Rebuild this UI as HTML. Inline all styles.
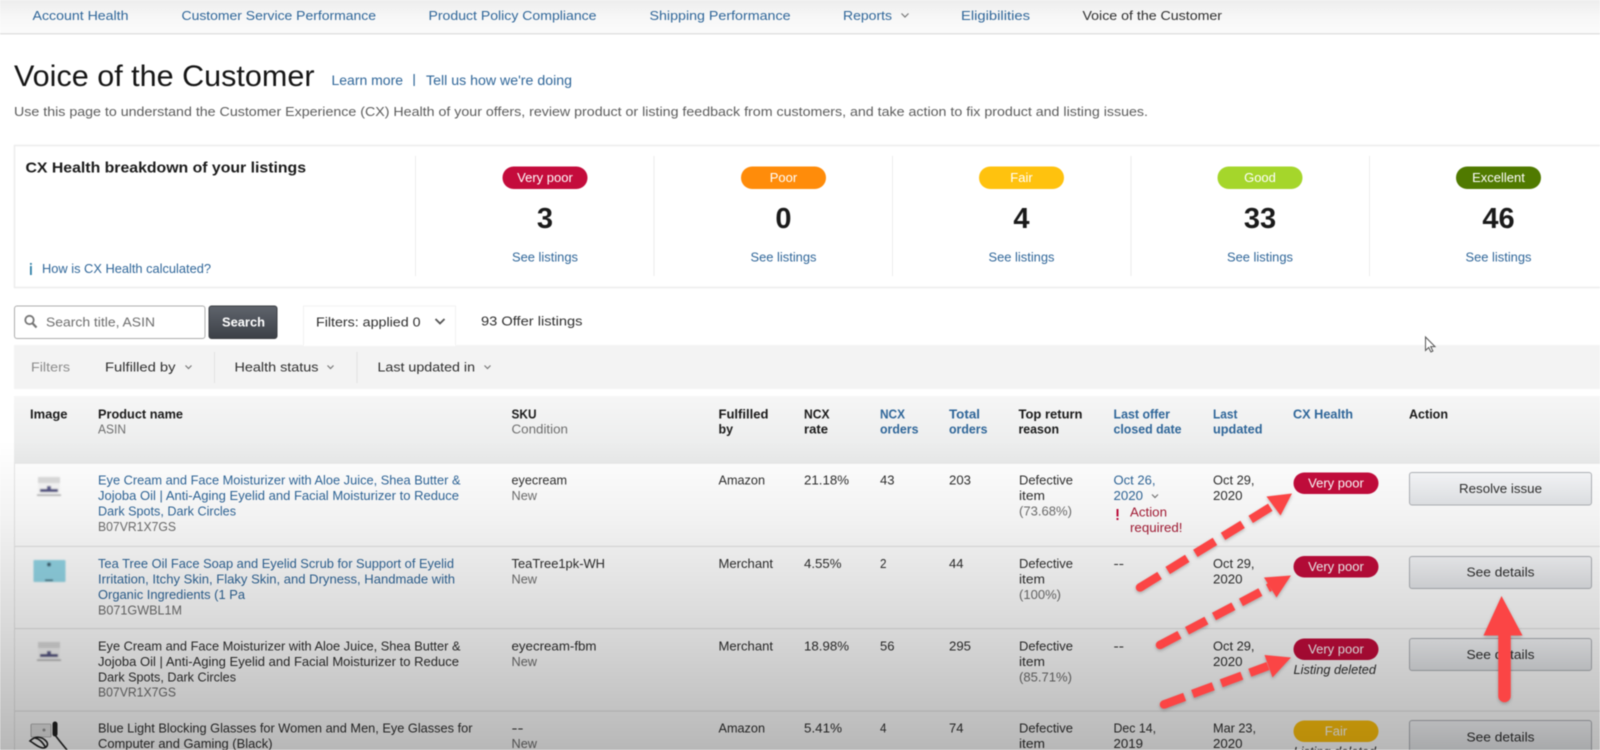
<!DOCTYPE html>
<html lang="en"><head><meta charset="utf-8"><title>Voice of the Customer</title>
<style>
html,body{margin:0;padding:0;background:#fff;width:1600px;height:750px;overflow:hidden}
svg{display:block;position:absolute;left:0;top:0;filter:blur(.5px)}
text{font-family:"Liberation Sans",sans-serif;font-size:13px;fill:#2e2e2e;white-space:pre}
.l{fill:#2f6699}.g{fill:#6e6e6e}.b{font-weight:700;fill:#1a1a1a}.lb{font-weight:700;fill:#2f6699}
.w{fill:#fff;text-anchor:middle}.r{fill:#a81c36}
.c{fill:none;stroke:#777;stroke-width:1.2}
.dash{fill:none;stroke:#fb4444;stroke-width:8.5}
.hd{fill:#fb4444}
.btn{fill:url(#bt);stroke:#b0b3b8;stroke-width:1}
</style></head><body>
<svg width="1600" height="750" viewBox="0 0 1600 750" xmlns="http://www.w3.org/2000/svg">
<defs>
<linearGradient id="nav" x1="0" y1="0" x2="0" y2="1"><stop offset="0" stop-color="#ededed"/><stop offset=".5" stop-color="#f7f7f7"/><stop offset="1" stop-color="#fbfbfb"/></linearGradient>
<linearGradient id="hd" x1="0" y1="0" x2="0" y2="1"><stop offset="0" stop-color="#f6f6f6"/><stop offset="1" stop-color="#e9eaea"/></linearGradient>
<linearGradient id="bt" x1="0" y1="0" x2="0" y2="1"><stop offset="0" stop-color="#f7f8fa"/><stop offset="1" stop-color="#e4e6e9"/></linearGradient>
<linearGradient id="sb" x1="0" y1="0" x2="0" y2="1"><stop offset="0" stop-color="#5f646c"/><stop offset="1" stop-color="#3c4047"/></linearGradient>
<linearGradient id="ov" x1="0" y1="0" x2="0" y2="1"><stop offset="0" stop-color="#000" stop-opacity="0"/><stop offset=".25" stop-color="#000" stop-opacity=".05"/><stop offset=".6" stop-color="#000" stop-opacity=".15"/><stop offset="1" stop-color="#000" stop-opacity=".28"/></linearGradient>
<filter id="sh" x="-20%" y="-20%" width="140%" height="140%"><feDropShadow dx="0" dy="1.5" stdDeviation="1.5" flood-color="#000" flood-opacity=".25"/></filter>
<filter id="bl" x="-10%" y="-10%" width="120%" height="120%"><feGaussianBlur stdDeviation=".8"/></filter>
</defs>

<!-- nav -->
<rect width="1600" height="33" fill="url(#nav)"/>
<rect y="33" width="1600" height="1.5" fill="#e2e2e2"/>
<text class="l" x="32.5" y="20" textLength="96" lengthAdjust="spacingAndGlyphs">Account Health</text>
<text class="l" x="181.5" y="20" textLength="194.5" lengthAdjust="spacingAndGlyphs">Customer Service Performance</text>
<text class="l" x="428.5" y="20" textLength="168" lengthAdjust="spacingAndGlyphs">Product Policy Compliance</text>
<text class="l" x="649.5" y="20" textLength="141" lengthAdjust="spacingAndGlyphs">Shipping Performance</text>
<text class="l" x="843" y="20" textLength="49" lengthAdjust="spacingAndGlyphs">Reports</text>
<path class="c" d="M901.5 13.5l3.5 3.5 3.5-3.5"/>
<text class="l" x="961" y="20" textLength="69" lengthAdjust="spacingAndGlyphs">Eligibilities</text>
<text x="1082.5" y="20" textLength="139.5" lengthAdjust="spacingAndGlyphs">Voice of the Customer</text>

<!-- title -->
<text x="14" y="86" style="font-size:30px;fill:#151515" textLength="300.5" lengthAdjust="spacingAndGlyphs">Voice of the Customer</text>
<text class="l" x="331.5" y="85" style="font-size:14px" textLength="71.5" lengthAdjust="spacingAndGlyphs">Learn more</text>
<rect x="413.5" y="74" width="1.2" height="12" fill="#2f6699"/>
<text class="l" x="426" y="85" style="font-size:14px" textLength="146" lengthAdjust="spacingAndGlyphs">Tell us how we're doing</text>
<text x="14" y="116" style="fill:#5c5c5c" textLength="1134" lengthAdjust="spacingAndGlyphs">Use this page to understand the Customer Experience (CX) Health of your offers, review product or listing feedback from customers, and take action to fix product and listing issues.</text>

<!-- CX box -->
<path d="M1600 145.5H14.5V287.5H1600" fill="none" stroke="#ececec" stroke-width="1.4"/>
<text class="b" x="25.5" y="172.5" style="font-size:15px" textLength="280.5" lengthAdjust="spacingAndGlyphs">CX Health breakdown of your listings</text>
<rect x="30" y="266" width="1.8" height="9" fill="#2f7fa6"/><rect x="30" y="263" width="1.8" height="1.8" fill="#2f7fa6"/>
<text class="l" x="42" y="273" textLength="169" lengthAdjust="spacingAndGlyphs">How is CX Health calculated?</text>
<g fill="#ececec"><rect x="415" y="156" width="1" height="120"/><rect x="653.5" y="156" width="1" height="120"/><rect x="892" y="156" width="1" height="120"/><rect x="1130.5" y="156" width="1" height="120"/><rect x="1369" y="156" width="1" height="120"/></g>

<rect x="502.5" y="166.5" width="85" height="22.5" rx="11.2" fill="#c40c3c"/>
<text class="w" x="545" y="182">Very poor</text>
<rect x="741" y="166.5" width="85" height="22.5" rx="11.2" fill="#ff8c0a"/>
<text class="w" x="783.5" y="182">Poor</text>
<rect x="979" y="166.5" width="85" height="22.5" rx="11.2" fill="#ffc20e"/>
<text class="w" x="1021.5" y="182">Fair</text>
<rect x="1217.5" y="166.5" width="85" height="22.5" rx="11.2" fill="#a5d62b"/>
<text class="w" x="1260" y="182">Good</text>
<rect x="1456" y="166.5" width="85" height="22.5" rx="11.2" fill="#507a00"/>
<text class="w" x="1498.5" y="182">Excellent</text>

<text class="b" x="545" y="228" style="font-size:29px;text-anchor:middle">3</text>
<text class="b" x="783.5" y="228" style="font-size:29px;text-anchor:middle">0</text>
<text class="b" x="1021.5" y="228" style="font-size:29px;text-anchor:middle">4</text>
<text class="b" x="1260" y="228" style="font-size:29px;text-anchor:middle">33</text>
<text class="b" x="1498.5" y="228" style="font-size:29px;text-anchor:middle">46</text>
<text class="l" x="512" y="261.5" textLength="66" lengthAdjust="spacingAndGlyphs">See listings</text>
<text class="l" x="750.5" y="261.5" textLength="66" lengthAdjust="spacingAndGlyphs">See listings</text>
<text class="l" x="988.5" y="261.5" textLength="66" lengthAdjust="spacingAndGlyphs">See listings</text>
<text class="l" x="1227" y="261.5" textLength="66" lengthAdjust="spacingAndGlyphs">See listings</text>
<text class="l" x="1465.5" y="261.5" textLength="66" lengthAdjust="spacingAndGlyphs">See listings</text>

<!-- filter bar background -->
<rect x="14" y="345" width="1586" height="44" fill="#f3f3f3"/>
<!-- search -->
<rect x="14.5" y="306" width="190.5" height="32.5" rx="2.5" fill="#fff" stroke="#adadad"/>
<circle cx="29.5" cy="320" r="4.2" fill="none" stroke="#777" stroke-width="1.8"/><path d="M32.5 323.2l4 4.3" stroke="#777" stroke-width="2.2" fill="none"/>
<text class="g" x="46" y="326.5" textLength="109" lengthAdjust="spacingAndGlyphs">Search title, ASIN</text>
<rect x="209" y="306" width="68" height="32.5" rx="2.5" fill="url(#sb)" stroke="#3a3d42"/>
<text class="b" x="222" y="326.5" style="fill:#fff" textLength="43" lengthAdjust="spacingAndGlyphs">Search</text>
<rect x="303.5" y="306" width="152" height="40" fill="#fff"/>
<path d="M303.5 345V306H455.5V345" fill="none" stroke="#f2f2f2"/>
<text x="316" y="326.5" textLength="104.5" lengthAdjust="spacingAndGlyphs">Filters: applied 0</text>
<path d="M435.5 319l4.5 4.5 4.5-4.5" fill="none" stroke="#555" stroke-width="1.8"/>
<text x="481" y="325.5" textLength="101.5" lengthAdjust="spacingAndGlyphs">93 Offer listings</text>

<text x="31" y="371.5" style="fill:#8b8b8b" textLength="39" lengthAdjust="spacingAndGlyphs">Filters</text>
<text x="105" y="371.5" textLength="70.5" lengthAdjust="spacingAndGlyphs">Fulfilled by</text>
<path class="c" d="M185.5 365.5l3 3 3-3"/>
<rect x="214" y="352" width="1" height="31" fill="#e2e2e2"/>
<text x="234.5" y="371.5" textLength="84" lengthAdjust="spacingAndGlyphs">Health status</text>
<path class="c" d="M327.5 365.5l3 3 3-3"/>
<rect x="356.5" y="352" width="1" height="31" fill="#e2e2e2"/>
<text x="377.5" y="371.5" textLength="97.5" lengthAdjust="spacingAndGlyphs">Last updated in</text>
<path class="c" d="M484.5 365.5l3 3 3-3"/>

<!-- table header -->
<rect x="14" y="396" width="1586" height="67" fill="url(#hd)"/>
<text class="b" x="30" y="418.5" textLength="37.5" lengthAdjust="spacingAndGlyphs">Image</text>
<text class="b" x="98" y="418.5" textLength="85" lengthAdjust="spacingAndGlyphs">Product name</text>
<text class="g" x="98" y="433.5" textLength="28" lengthAdjust="spacingAndGlyphs">ASIN</text>
<text class="b" x="511.5" y="418.5" textLength="25" lengthAdjust="spacingAndGlyphs">SKU</text>
<text class="g" x="511.5" y="433.5" textLength="56.5" lengthAdjust="spacingAndGlyphs">Condition</text>
<text class="b" x="718.5" y="418.5" textLength="50" lengthAdjust="spacingAndGlyphs">Fulfilled</text>
<text class="b" x="718.5" y="433.5" textLength="14.5" lengthAdjust="spacingAndGlyphs">by</text>
<text class="b" x="804" y="418.5" textLength="25.5" lengthAdjust="spacingAndGlyphs">NCX</text>
<text class="b" x="804" y="433.5" textLength="24" lengthAdjust="spacingAndGlyphs">rate</text>
<text class="lb" x="880" y="418.5" textLength="25" lengthAdjust="spacingAndGlyphs">NCX</text>
<text class="lb" x="880" y="433.5" textLength="38.5" lengthAdjust="spacingAndGlyphs">orders</text>
<text class="lb" x="949" y="418.5" textLength="31" lengthAdjust="spacingAndGlyphs">Total</text>
<text class="lb" x="949" y="433.5" textLength="38.5" lengthAdjust="spacingAndGlyphs">orders</text>
<text class="b" x="1018.5" y="418.5" textLength="64" lengthAdjust="spacingAndGlyphs">Top return</text>
<text class="b" x="1018.5" y="433.5" textLength="40.5" lengthAdjust="spacingAndGlyphs">reason</text>
<text class="lb" x="1113.5" y="418.5" textLength="56.5" lengthAdjust="spacingAndGlyphs">Last offer</text>
<text class="lb" x="1113.5" y="433.5" textLength="68" lengthAdjust="spacingAndGlyphs">closed date</text>
<text class="lb" x="1213" y="418.5" textLength="24.5" lengthAdjust="spacingAndGlyphs">Last</text>
<text class="lb" x="1213" y="433.5" textLength="49.5" lengthAdjust="spacingAndGlyphs">updated</text>
<text class="lb" x="1293" y="418.5" textLength="60" lengthAdjust="spacingAndGlyphs">CX Health</text>
<text class="b" x="1409" y="418.5" textLength="39" lengthAdjust="spacingAndGlyphs">Action</text>

<!-- table rows -->
<rect x="14" y="463" width="1586" height="287" fill="#fff"/>
<g fill="#e6e6e6"><rect x="14" y="462.5" width="1586" height="1.2"/><rect x="14" y="545.8" width="1586" height="1.2"/><rect x="14" y="628" width="1586" height="1.2"/><rect x="14" y="710.5" width="1586" height="1.2"/><rect x="14" y="463" width="1" height="287"/></g>

<!-- thumbnails -->
<g filter="url(#bl)">
<rect x="38" y="477" width="22" height="18" rx="2" fill="#f7f7f7"/><rect x="38" y="477" width="22" height="6" fill="#dcdcdc"/><rect x="40" y="489" width="18" height="3" fill="#4a4a7e"/><rect x="47" y="486" width="4" height="4" fill="#5a5a8a"/><rect x="37" y="494.5" width="24" height="1.2" fill="#999"/>
<rect x="33.5" y="560" width="32" height="22" rx="1" fill="#93d6e6"/><circle cx="49" cy="564.5" r="2" fill="#3d5e70"/><rect x="45" y="579.5" width="8" height="1.5" fill="#2e4f60"/>
<rect x="38" y="642" width="22" height="18" rx="2" fill="#f7f7f7"/><rect x="38" y="642" width="22" height="6" fill="#dcdcdc"/><rect x="40" y="654" width="18" height="3" fill="#4a4a7e"/><rect x="47" y="651" width="4" height="4" fill="#5a5a8a"/><rect x="37" y="659.5" width="24" height="1.2" fill="#999"/>
</g>
<rect x="31" y="724" width="20" height="13" rx="1" fill="#e6e6e6" stroke="#888" stroke-width=".6"/><circle cx="44" cy="730" r="1.5" fill="#999"/>
<path d="M55 724v10" stroke="#222" stroke-width="5" stroke-linecap="round"/>
<path d="M30 741c6-6 12-4 16 0 3 3 1 7-3 7s-8-4-13-7zM35 738c5 1 8 5 11 10M55 735c3 4 7 9 12 15" fill="none" stroke="#222" stroke-width="1.6"/>

<!-- Row 1 -->
<text class="l" x="98" y="484.5" textLength="362.5" lengthAdjust="spacingAndGlyphs">Eye Cream and Face Moisturizer with Aloe Juice, Shea Butter &amp;</text>
<text class="l" x="98" y="500" textLength="361" lengthAdjust="spacingAndGlyphs">Jojoba Oil | Anti-Aging Eyelid and Facial Moisturizer to Reduce</text>
<text class="l" x="98" y="515.5" textLength="138" lengthAdjust="spacingAndGlyphs">Dark Spots, Dark Circles</text>
<text class="g" x="98" y="531" textLength="78" lengthAdjust="spacingAndGlyphs">B07VR1X7GS</text>
<text x="511.5" y="484.5" textLength="55.5" lengthAdjust="spacingAndGlyphs">eyecream</text>
<text class="g" x="511.5" y="500" textLength="25.5" lengthAdjust="spacingAndGlyphs">New</text>
<text x="718.5" y="484.5" textLength="46.5" lengthAdjust="spacingAndGlyphs">Amazon</text>
<text x="804" y="484.5" textLength="45" lengthAdjust="spacingAndGlyphs">21.18%</text>
<text x="880" y="484.5" textLength="14.5" lengthAdjust="spacingAndGlyphs">43</text>
<text x="949" y="484.5" textLength="22" lengthAdjust="spacingAndGlyphs">203</text>
<text x="1019" y="484.5" textLength="54" lengthAdjust="spacingAndGlyphs">Defective</text>
<text x="1019" y="500" textLength="26" lengthAdjust="spacingAndGlyphs">item</text>
<text class="g" x="1019" y="515.5" textLength="53" lengthAdjust="spacingAndGlyphs">(73.68%)</text>
<text class="l" x="1113.5" y="484.5" textLength="42" lengthAdjust="spacingAndGlyphs">Oct 26,</text>
<text class="l" x="1113.5" y="500" textLength="29.5" lengthAdjust="spacingAndGlyphs">2020</text>
<path class="c" d="M1152 494.5l3 3 3-3"/>
<rect x="1116.5" y="509" width="2" height="7.5" fill="#c40c3c"/><rect x="1116.5" y="518" width="2" height="2" fill="#c40c3c"/>
<text class="r" x="1130" y="516.5" textLength="37" lengthAdjust="spacingAndGlyphs">Action</text>
<text class="r" x="1130" y="532" textLength="52.5" lengthAdjust="spacingAndGlyphs">required!</text>
<text x="1213" y="484.5" textLength="41.5" lengthAdjust="spacingAndGlyphs">Oct 29,</text>
<text x="1213" y="500" textLength="29.5" lengthAdjust="spacingAndGlyphs">2020</text>
<rect x="1293.5" y="472.5" width="85" height="21.5" rx="10.7" fill="#c40c3c"/>
<text class="w" x="1336" y="487.5">Very poor</text>
<rect class="btn" x="1409.5" y="472.5" width="182" height="32.5" rx="2.5"/>
<text x="1459" y="493" textLength="83" lengthAdjust="spacingAndGlyphs">Resolve issue</text>

<!-- Row 2 -->
<text class="l" x="98" y="568" textLength="356" lengthAdjust="spacingAndGlyphs">Tea Tree Oil Face Soap and Eyelid Scrub for Support of Eyelid</text>
<text class="l" x="98" y="583.5" textLength="357" lengthAdjust="spacingAndGlyphs">Irritation, Itchy Skin, Flaky Skin, and Dryness, Handmade with</text>
<text class="l" x="98" y="599" textLength="147" lengthAdjust="spacingAndGlyphs">Organic Ingredients (1 Pa</text>
<text class="g" x="98" y="614.5" textLength="84" lengthAdjust="spacingAndGlyphs">B071GWBL1M</text>
<text x="511.5" y="568" textLength="93.5" lengthAdjust="spacingAndGlyphs">TeaTree1pk-WH</text>
<text class="g" x="511.5" y="583.5" textLength="25.5" lengthAdjust="spacingAndGlyphs">New</text>
<text x="718.5" y="568" textLength="54.5" lengthAdjust="spacingAndGlyphs">Merchant</text>
<text x="804" y="568" textLength="37.5" lengthAdjust="spacingAndGlyphs">4.55%</text>
<text x="880" y="568" textLength="6.5" lengthAdjust="spacingAndGlyphs">2</text>
<text x="949" y="568" textLength="14.5" lengthAdjust="spacingAndGlyphs">44</text>
<text x="1019" y="568" textLength="54" lengthAdjust="spacingAndGlyphs">Defective</text>
<text x="1019" y="583.5" textLength="26" lengthAdjust="spacingAndGlyphs">item</text>
<text class="g" x="1019" y="599" textLength="42" lengthAdjust="spacingAndGlyphs">(100%)</text>
<text x="1113.5" y="568" textLength="10.5" lengthAdjust="spacingAndGlyphs">--</text>
<text x="1213" y="568" textLength="41.5" lengthAdjust="spacingAndGlyphs">Oct 29,</text>
<text x="1213" y="583.5" textLength="29.5" lengthAdjust="spacingAndGlyphs">2020</text>
<rect x="1293.5" y="556" width="85" height="21.5" rx="10.7" fill="#c40c3c"/>
<text class="w" x="1336" y="571">Very poor</text>
<rect class="btn" x="1409.5" y="556.5" width="182" height="32" rx="2.5"/>
<text x="1466.5" y="576.5" textLength="68" lengthAdjust="spacingAndGlyphs">See details</text>

<!-- Row 3 -->
<text x="98" y="650.5" textLength="362.5" lengthAdjust="spacingAndGlyphs">Eye Cream and Face Moisturizer with Aloe Juice, Shea Butter &amp;</text>
<text x="98" y="666" textLength="361" lengthAdjust="spacingAndGlyphs">Jojoba Oil | Anti-Aging Eyelid and Facial Moisturizer to Reduce</text>
<text x="98" y="681.5" textLength="138" lengthAdjust="spacingAndGlyphs">Dark Spots, Dark Circles</text>
<text class="g" x="98" y="696.5" textLength="78" lengthAdjust="spacingAndGlyphs">B07VR1X7GS</text>
<text x="511.5" y="650.5" textLength="85" lengthAdjust="spacingAndGlyphs">eyecream-fbm</text>
<text class="g" x="511.5" y="666" textLength="25.5" lengthAdjust="spacingAndGlyphs">New</text>
<text x="718.5" y="650.5" textLength="54.5" lengthAdjust="spacingAndGlyphs">Merchant</text>
<text x="804" y="650.5" textLength="45" lengthAdjust="spacingAndGlyphs">18.98%</text>
<text x="880" y="650.5" textLength="14.5" lengthAdjust="spacingAndGlyphs">56</text>
<text x="949" y="650.5" textLength="22" lengthAdjust="spacingAndGlyphs">295</text>
<text x="1019" y="650.5" textLength="54" lengthAdjust="spacingAndGlyphs">Defective</text>
<text x="1019" y="666" textLength="26" lengthAdjust="spacingAndGlyphs">item</text>
<text class="g" x="1019" y="681.5" textLength="53" lengthAdjust="spacingAndGlyphs">(85.71%)</text>
<text x="1113.5" y="650.5" textLength="10.5" lengthAdjust="spacingAndGlyphs">--</text>
<text x="1213" y="650.5" textLength="41.5" lengthAdjust="spacingAndGlyphs">Oct 29,</text>
<text x="1213" y="666" textLength="29.5" lengthAdjust="spacingAndGlyphs">2020</text>
<rect x="1293.5" y="638.5" width="85" height="21.5" rx="10.7" fill="#c40c3c"/>
<text class="w" x="1336" y="653.5">Very poor</text>
<text x="1293.5" y="674" style="font-style:italic" textLength="82.5" lengthAdjust="spacingAndGlyphs">Listing deleted</text>
<rect class="btn" x="1409.5" y="638.5" width="182" height="32" rx="2.5"/>
<text x="1466.5" y="659" textLength="68" lengthAdjust="spacingAndGlyphs">See details</text>

<!-- Row 4 -->
<text x="98" y="732.5" textLength="374.5" lengthAdjust="spacingAndGlyphs">Blue Light Blocking Glasses for Women and Men, Eye Glasses for</text>
<text x="98" y="748" textLength="174.5" lengthAdjust="spacingAndGlyphs">Computer and Gaming (Black)</text>
<text x="511.5" y="732.5" textLength="12" lengthAdjust="spacingAndGlyphs">--</text>
<text class="g" x="511.5" y="748" textLength="25.5" lengthAdjust="spacingAndGlyphs">New</text>
<text x="718.5" y="732.5" textLength="46.5" lengthAdjust="spacingAndGlyphs">Amazon</text>
<text x="804" y="732.5" textLength="38" lengthAdjust="spacingAndGlyphs">5.41%</text>
<text x="880" y="732.5" textLength="6.5" lengthAdjust="spacingAndGlyphs">4</text>
<text x="949" y="732.5" textLength="14.5" lengthAdjust="spacingAndGlyphs">74</text>
<text x="1019" y="732.5" textLength="54" lengthAdjust="spacingAndGlyphs">Defective</text>
<text x="1019" y="748" textLength="26" lengthAdjust="spacingAndGlyphs">item</text>
<text x="1113.5" y="732.5" textLength="42.5" lengthAdjust="spacingAndGlyphs">Dec 14,</text>
<text x="1113.5" y="748" textLength="29.5" lengthAdjust="spacingAndGlyphs">2019</text>
<text x="1213" y="732.5" textLength="43" lengthAdjust="spacingAndGlyphs">Mar 23,</text>
<text x="1213" y="748" textLength="29.5" lengthAdjust="spacingAndGlyphs">2020</text>
<rect x="1293.5" y="720.5" width="85" height="21.5" rx="10.7" fill="#ffc20e"/>
<text class="w" x="1336" y="735.5">Fair</text>
<text x="1293.5" y="756" style="font-style:italic" textLength="82.5" lengthAdjust="spacingAndGlyphs">Listing deleted</text>
<rect class="btn" x="1409.5" y="720.5" width="182" height="40" rx="2.5"/>
<text x="1466.5" y="741.5" textLength="68" lengthAdjust="spacingAndGlyphs">See details</text>

<!-- darkening gradient -->
<rect x="0" y="440" width="1600" height="310" fill="url(#ov)"/>

<!-- mouse cursor -->
<path d="M1425.5 337v13.5l3.2-3 2.2 4.5 2-1-2.2-4.4h4.3z" fill="#fff" stroke="#555" stroke-width="1"/>

<!-- arrows -->
<g filter="url(#sh)">
<path class="dash" d="M1140 587.5L1274 505" stroke-dasharray="23 9.5"/>
<circle cx="1140" cy="587.5" r="4.25" class="hd"/>
<path class="hd" d="M1292 493.5L1266.5 496.5L1280.5 515.5Z"/>
</g>
<g filter="url(#sh)">
<path class="dash" d="M1160 645L1270 587" stroke-dasharray="22 8.5"/>
<circle cx="1160" cy="645" r="4.25" class="hd"/>
<path class="hd" d="M1291 575.5L1264 577.5L1276.5 597.5Z"/>
</g>
<g filter="url(#sh)">
<path class="dash" d="M1164 704.5L1268 666" stroke-dasharray="22 8.5"/>
<circle cx="1164" cy="704.5" r="4.25" class="hd"/>
<path class="hd" d="M1291 657.5L1264.5 655L1272.5 677.5Z"/>
</g>
<g filter="url(#sh)">
<path d="M1504.5 632V696" fill="none" stroke="#fb4444" stroke-width="12.5" stroke-linecap="round"/>
<path class="hd" d="M1501.5 596L1483.5 635.5H1522.5Z"/>
</g>
</svg>
</body></html>
